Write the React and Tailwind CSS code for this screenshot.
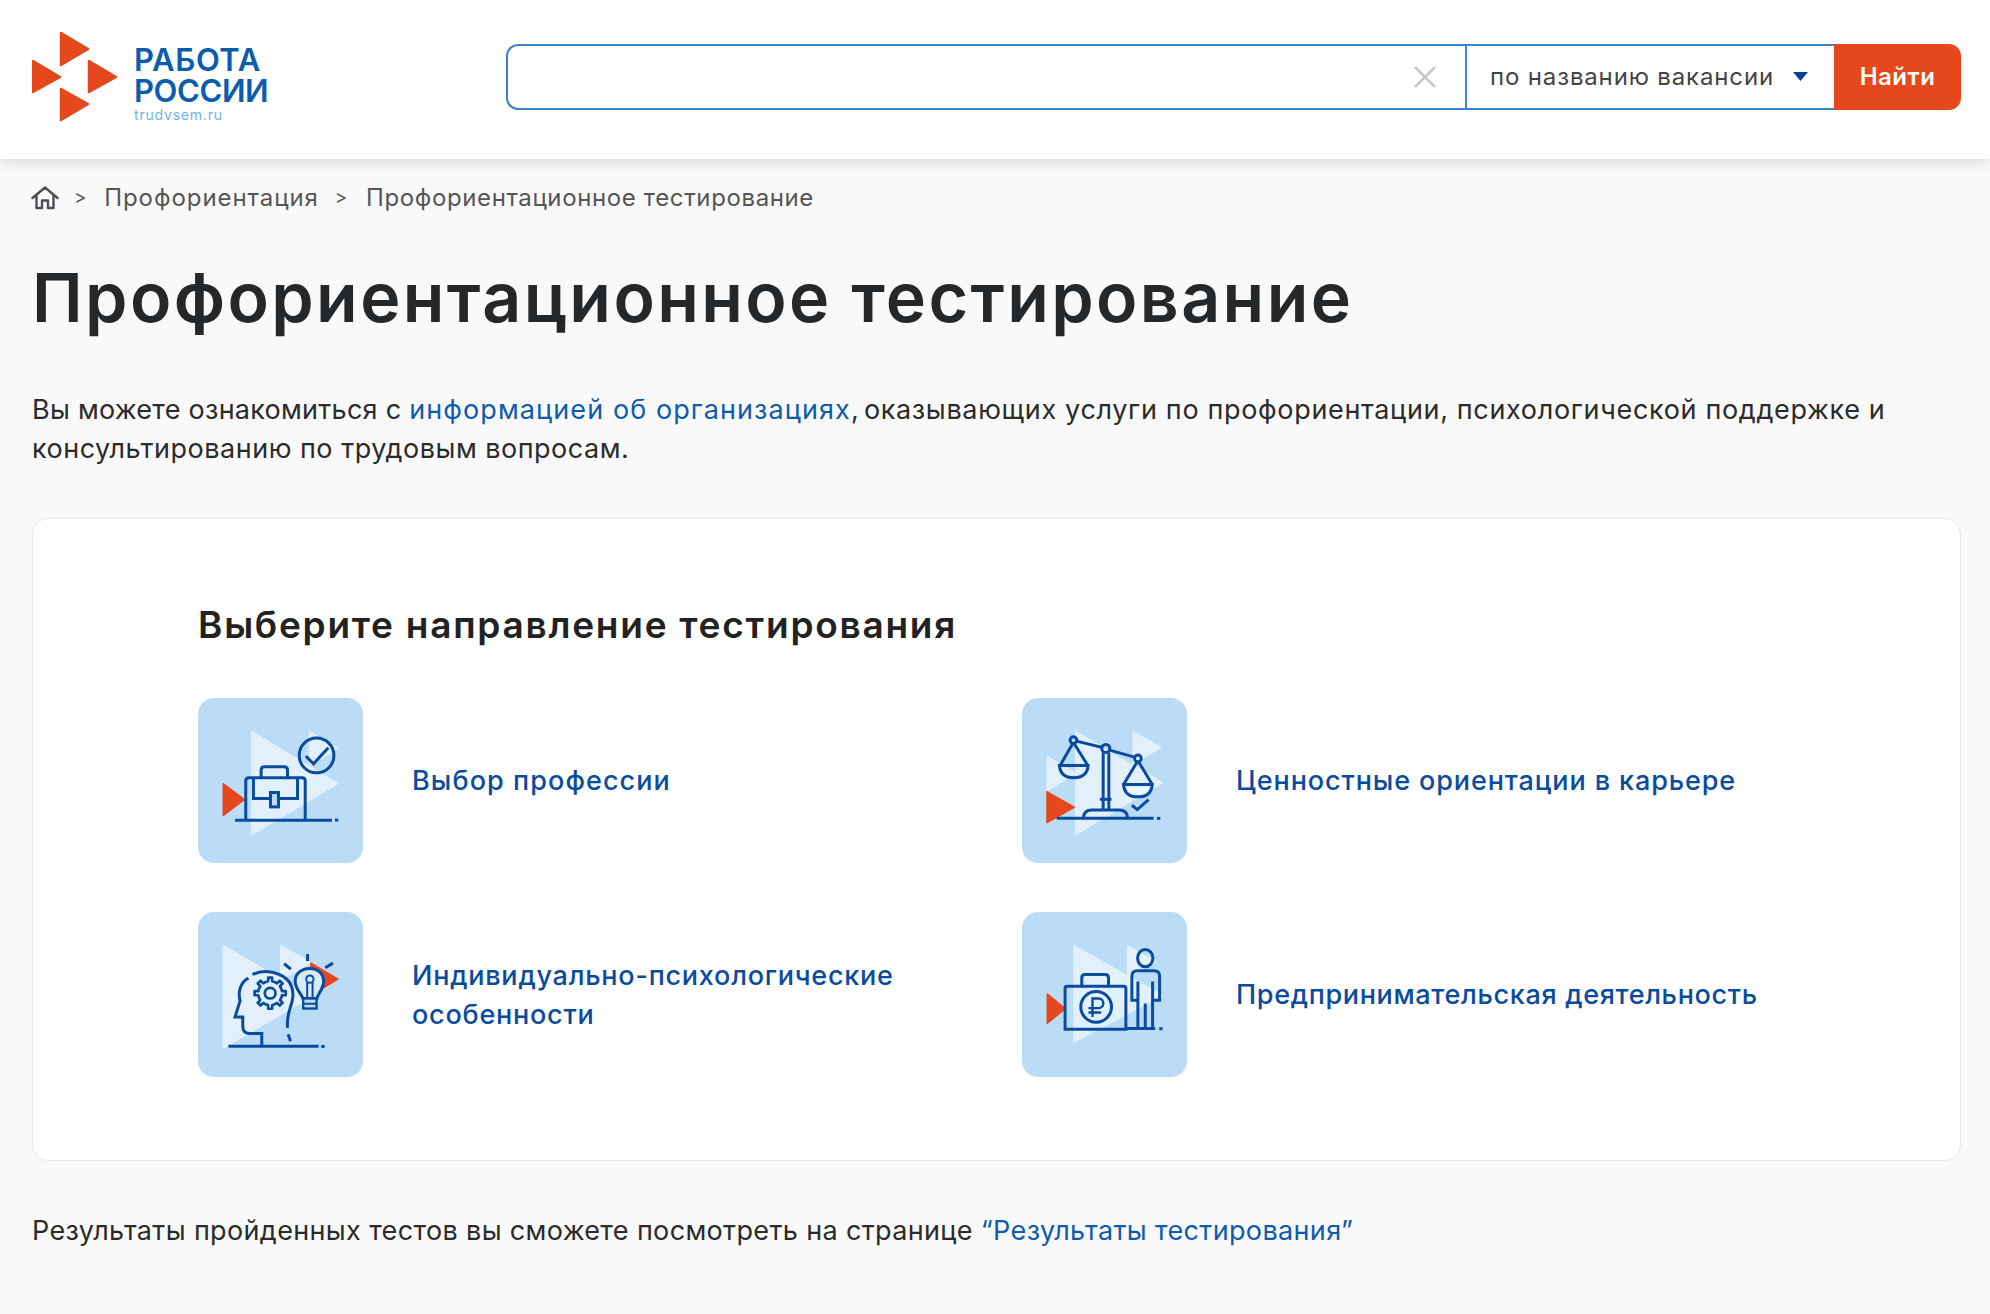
import React from "react";

const N = "#0a4b9e";
const LIGHT = "#e1f0fb";
const RED = "#e6481e";

function Tile({ vb, children }) {
  return (
    <div className="w-[165px] h-[165px] shrink-0 rounded-[16px] bg-[#bbdcf6] overflow-hidden">
      <svg viewBox={vb} width="165" height="165" fill="none" stroke={N} strokeWidth="9">
        {children}
      </svg>
    </div>
  );
}
const Tri = ({ p, f = LIGHT }) => <polygon points={p} fill={f} stroke={f} strokeWidth="5" strokeLinejoin="round" />;

function gearPath(cx, cy, r1, r2, n) {
  let d = "";
  const step = (Math.PI * 2) / n;
  for (let i = 0; i < n; i++) {
    const a = i * step - step / 2;
    const pts = [
      [r1, a + step * 0.0],
      [r1, a + step * 0.28],
      [r2, a + step * 0.34],
      [r2, a + step * 0.66],
      [r1, a + step * 0.72],
    ];
    pts.forEach(([r, t], j) => {
      const x = (cx + r * Math.cos(t)).toFixed(1);
      const y = (cy + r * Math.sin(t)).toFixed(1);
      d += (i === 0 && j === 0 ? "M" : "L") + x + " " + y + " ";
    });
  }
  return d + "Z";
}

const IconJob = () => (
  <Tile vb="24 24 494 494">
    <Tri p="185,125 442,280 185,433" />
    <Tri p="358,125 442,175 358,225" />
    <Tri p="100,281 162,328 100,375" f={RED} />
    <circle cx="379" cy="196" r="52" />
    <path d="M347 198 L370 221 L414 173" />
    <path d="M167 390 V272 q0-9 9-9 H336 q9 0 9 9 V390" />
    <path d="M213 263 V240 q0-10 10-10 H282 q10 0 10 10 V263" />
    <path d="M190 263 V325 H322 V263" />
    <rect x="241" y="307" width="24" height="43" fill="#bbdcf6" />
    <path d="M135 390 H425" />
    <rect x="434" y="385" width="10" height="9" fill={N} stroke="none" />
  </Tile>
);

const IconScales = () => (
  <Tile vb="21 24 494 494">
    <Tri p="182,125 438,278 182,433" />
    <Tri p="354,125 436,172 354,220" />
    <Tri p="97,200 180,250 97,300" />
    <Tri p="354,225 440,278 354,328" />
    <Tri p="96,305 177,351 96,397" f={RED} />
    <path d="M184 153 L262 172 M283 180 L358 201" />
    <circle cx="175" cy="150" r="10" />
    <circle cx="272" cy="175" r="12" />
    <circle cx="368" cy="205" r="10" />
    <path d="M264 187 V358 M281 187 V358 M254 327 H289" />
    <path d="M205 384 q0-25 25-25 H312 q25 0 25 25" />
    <path d="M125 384 H415" />
    <rect x="425" y="380" width="10" height="9" fill={N} stroke="none" />
    <path d="M173 160 L135 226 M177 160 L218 226" />
    <path d="M133 226 H219 q-3 37 -43 37 q-40 0 -43 -37 Z" />
    <path d="M366 215 L325 283 M370 215 L411 283" />
    <path d="M325 283 H411 q-3 37 -43 37 q-40 0 -43 -37 Z" />
    <path d="M337 293 H399 q-6 20 -31 20 q-25 0 -31 -20 Z" fill="#eaf5fd" stroke="none" />
    <path d="M350 345 L366 358 L400 328" />
  </Tile>
);

const IconMind = () => (
  <Tile vb="24 21 494 494">
    <Tri p="100,122 362,275 100,428" />
    <Tri p="272,122 362,172 272,225" />
    <Tri p="362,174 443,222 362,270" f={RED} />
    <path d="M352 147 V168 M282 176 L302 192 M405 188 L428 174" />
    <path d="M187 208 C235 188 312 205 308 275 C306 305 288 320 292 368" />
    <path d="M294 387 L301 408" />
    <path d="M175 219 C150 232 143 262 150 287 L135 335 H158 V362 Q158 385 180 385 H215 V420" />
    <path d={gearPath(240, 264, 36, 47, 8)} strokeWidth="8" strokeLinejoin="round" />
    <circle cx="240" cy="264" r="16" strokeWidth="8" />
    <path d="M338 280 C332 262 315 252 315 228 C315 205 335 190 358 190 C382 190 400 205 400 228 C400 252 384 262 380 280 Z" fill="#d7ebfa" />
    <circle cx="359" cy="222" r="11" strokeWidth="6" />
    <path d="M351 231 V280 M367 231 V280" strokeWidth="6" />
    <rect x="339" y="280" width="40" height="30" fill="#bbdcf6" strokeWidth="7" />
    <path d="M339 296 H379" strokeWidth="6" />
    <path d="M115 423 H385" />
    <rect x="393" y="419" width="10" height="9" fill={N} stroke="none" />
  </Tile>
);

const IconBiz = () => (
  <Tile vb="21 21 494 494">
    <Tri p="177,122 440,270 177,410" />
    <Tri p="337,122 420,170 337,218" />
    <Tri p="97,267 150,310 97,354" f={RED} />
    <path d="M150 372 V249 q0-6 6-6 H326 q6 0 6 6 V372 Z" />
    <path d="M200 243 V218 q0-10 10-10 H270 q10 0 10 10 V243" />
    <circle cx="243" cy="305" r="46" />
    <path d="M232 335 V280 H250 a14 14 0 0 1 0 29 H220 M220 322 H258" strokeWidth="7" />
    <path d="M332 370 H420" />
    <rect x="432" y="366" width="10" height="9" fill={N} stroke="none" />
    <ellipse cx="390" cy="159" rx="23" ry="26" />
    <path d="M368 285 H350 V214 q0-17 17-17 H416 q17 0 17 17 V285 H412" />
    <path d="M368 229 V370 M412 229 V370 M390 295 V370" />
  </Tile>
);

const LogoMark = () => (
  <svg width="86" height="90" viewBox="32 31 86 90" className="shrink-0" fill={RED} stroke={RED} strokeWidth="2.5" strokeLinejoin="round">
    <polygon points="61,32 88,48 61,64" />
    <polygon points="33,60 60,76 33,91" />
    <polygon points="89,60 116,76 89,91" />
    <polygon points="61,88 88,103 61,119" />
  </svg>
);

const Item = ({ icon, cls, children }) => (
  <div className="flex items-center gap-[49px]">
    {icon}
    <div className={"text-[27px] leading-[39px] text-[#0a4b9e] font-[450] whitespace-nowrap " + cls}>{children}</div>
  </div>
);

export default function App() {
  return (
    <div className="min-h-[1314px] bg-[#f9f9f9]" style={{ fontFamily: 'Inter, "Noto Sans", sans-serif' }}>
      <header className="h-[159px] bg-white shadow-[0_2px_14px_rgba(0,0,0,0.14)] flex items-center pl-[32px] pr-[29px] pb-[6px] relative">
        <div className="w-[474px] shrink-0 flex items-center gap-[16px]">
          <LogoMark />
          <div className="flex flex-col pt-[14px]">
            <div className="text-[31px] leading-[31px] font-semibold text-[#0b5cad]">
              <div className="tracking-[0.6px]">РАБОТА</div>
              <div className="tracking-[-0.4px]">РОССИИ</div>
            </div>
            <div className="text-[14px] leading-[18px] tracking-[0.8px] text-[#6db3ea]">trudvsem.ru</div>
          </div>
        </div>
        <div className="flex-1 h-[66px] flex">
          <div className="flex-1 flex items-center justify-end pr-[29px] bg-white border-[#3a85cf] border-r-0 rounded-l-[12px] border-[2px]">
            <svg width="22" height="22" viewBox="0 0 22 22" stroke="#c9c9c9" strokeWidth="2.5"><path d="M1 1 L21 21 M21 1 L1 21" /></svg>
          </div>
          <div className="w-[369px] flex items-center justify-between pl-[23px] pr-[25px] bg-white border-y-[2px] border-l-[2px] border-[#3a85cf]">
            <span className="text-[24px] text-[#444] tracking-[0.85px] whitespace-nowrap">по названию вакансии</span>
            <svg width="17" height="10" viewBox="0 0 17 10" fill="#0a3f94"><polygon points="1,0 16,0 8.5,9" /></svg>
          </div>
          <div className="w-[127px] flex items-center justify-center bg-[#e6481e] rounded-r-[12px] text-white text-[24px] tracking-[0.5px] font-semibold">Найти</div>
        </div>
      </header>
      <main className="pl-[32px] pr-[29px]">
        <nav className="flex items-center h-[30px] mt-[24px] text-[24px] tracking-[0.62px] text-[#555] whitespace-nowrap">
          <svg width="28" height="24" viewBox="0 0 28 24" fill="none" stroke="#4a4f55" strokeWidth="2.4" strokeLinejoin="round" strokeLinecap="round" className="-ml-[1px]">
            <path d="M1.5 12 L14 1.5 L26.5 12 M5.5 9 V22 H11 V14.5 H17 V22 H22.5 V9" />
          </svg>
          <span className="ml-[15px] text-[19px]">&gt;</span>
          <span className="ml-[17px] tracking-[0.94px]">Профориентация</span>
          <span className="ml-[16px] text-[19px]">&gt;</span>
          <span className="ml-[18px]">Профориентационное тестирование</span>
        </nav>
        <h1 className="mt-[44px] text-[68px] leading-[80px] tracking-[2.4px] font-semibold text-[#25282b] whitespace-nowrap">Профориентационное тестирование</h1>
        <p className="mt-[53px] text-[27px] leading-[39px] tracking-[0.66px] text-[#2b2b2b] whitespace-nowrap">
          <span className="tracking-[0.26px]">Вы можете ознакомиться с </span><span className="text-[#0f5bb0] tracking-[1.09px]">информацией об организациях</span><span className="tracking-[-1.2px]">, </span>оказывающих услуги по профориентации, психологической поддержке и<br />
          <span className="tracking-[0.5px]">консультированию по трудовым вопросам.</span>
        </p>
        <section className="mt-[50px] h-[643px] bg-white border border-[#e6e9ec] rounded-[16px] pl-[165px] pt-[83px]">
          <h2 className="text-[37px] leading-[46px] tracking-[1.75px] font-semibold text-[#222] whitespace-nowrap">Выберите направление тестирования</h2>
          <div className="mt-[50px] grid grid-cols-[824px_1fr] auto-rows-[165px] gap-y-[49px]">
            <Item icon={<IconJob />} cls="tracking-[1.08px]">Выбор профессии</Item>
            <Item icon={<IconScales />} cls="tracking-[0.89px]">Ценностные ориентации в карьере</Item>
            <Item icon={<IconMind />} cls="tracking-[0.76px]">Индивидуально-психологические<br />особенности</Item>
            <Item icon={<IconBiz />} cls="tracking-[0.67px]">Предпринимательская деятельность</Item>
          </div>
        </section>
        <p className="mt-[50px] text-[27px] leading-[39px] tracking-[0.35px] text-[#2b2b2b] whitespace-nowrap">
          Результаты пройденных тестов вы сможете посмотреть на странице <span className="text-[#0f5bb0]">“Результаты тестирования”</span>
        </p>
      </main>
    </div>
  );
}
